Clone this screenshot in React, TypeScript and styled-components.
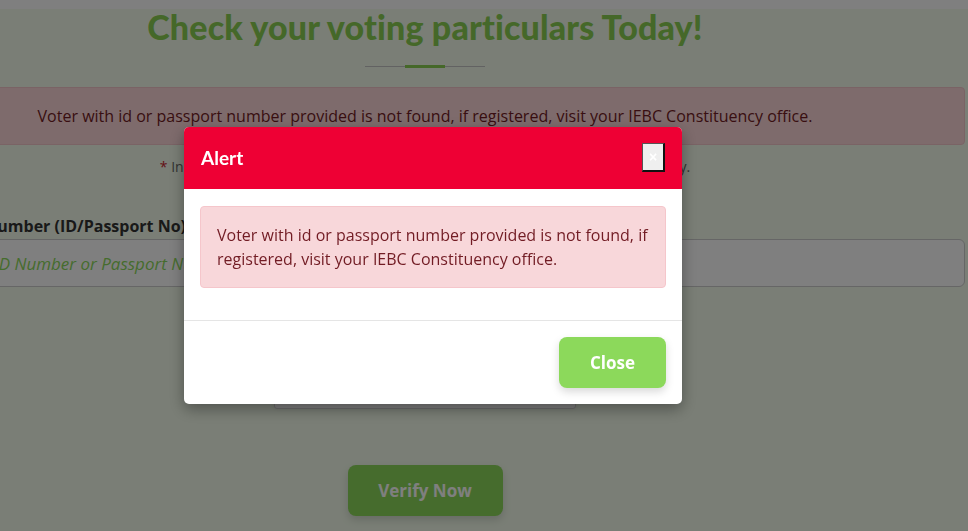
import React from "react";
import styled, { createGlobalStyle } from "styled-components";

const GlobalStyle = createGlobalStyle`
  html, body { margin: 0; padding: 0; }
  body {
    background: #f4fdec;
    font-family: "Open Sans", "Liberation Sans", sans-serif;
    overflow: hidden;
    width: 968px;
    height: 531px;
  }
  * { box-sizing: border-box; }
`;

const TopStrip = styled.div`
  height: 9px;
  background: #ffffff;
`;

const Page = styled.main`
  width: 1080px;
  margin-left: -115px;
  display: flex;
  flex-direction: column;
  align-items: center;
`;

const Title = styled.h1`
  margin: -2px 0 0;
  font-family: Lato, "Open Sans", sans-serif;
  font-weight: 900;
  font-size: 34px;
  line-height: 40px;
  letter-spacing: 0.15px;
  color: #8ad052;
`;

const Divider = styled.div`
  display: flex;
  align-items: center;
  margin-top: 18px;
  width: 120px;
`;

const DividerPart = styled.span<{ $thick?: boolean }>`
  flex: 1;
  height: ${(p) => (p.$thick ? "3px" : "1px")};
  background: ${(p) => (p.$thick ? "#8ad052" : "#c4c4c4")};
`;

const PageAlert = styled.div`
  align-self: stretch;
  margin-top: 19px;
  padding: 16px 20px;
  background: #fdd7d9;
  border: 1px solid #f5c6cb;
  border-radius: 4px;
  color: #721c24;
  font-size: 16px;
  line-height: 24px;
  text-align: center;
`;

const Note = styled.p`
  margin: 12px 0 0;
  font-size: 14px;
  line-height: 20px;
  color: #666;
`;

const Star = styled.span`
  color: #c8232c;
`;

const Field = styled.div`
  align-self: stretch;
  margin-top: 38px;
  display: flex;
  flex-direction: column;
`;

const Label = styled.label`
  padding-left: 12px;
  font-weight: 700;
  font-size: 16px;
  line-height: 22px;
  color: #333;
  margin-bottom: 2px;
`;

const Input = styled.input`
  height: 48px;
  border: 1px solid #ccc;
  border-radius: 6px;
  padding: 0 14px 0 26px;
  font-family: "Open Sans", sans-serif;
  font-size: 17px;
  background: #fff;
  &::placeholder {
    color: #8cd95b;
    font-style: italic;
  }
`;

const Captcha = styled.div`
  margin-top: 44px;
  width: 302px;
  height: 78px;
  background: #f9f9f9;
  border: 1px solid #d3d3d3;
  border-radius: 3px;
  box-shadow: 0 0 4px rgba(0, 0, 0, 0.08);
`;

const VerifyButton = styled.button`
  margin-top: 56px;
  width: 155px;
  height: 51px;
  border: none;
  border-radius: 8px;
  background: #8cd95b;
  color: #fff;
  font-family: "Open Sans", sans-serif;
  font-weight: 700;
  font-size: 17px;
  box-shadow: 0 4px 8px rgba(0, 0, 0, 0.15);
`;

const Overlay = styled.div`
  position: fixed;
  inset: 0;
  background: rgba(0, 0, 0, 0.5);
  padding: 127px 0 0 184px;
`;

const Dialog = styled.div`
  width: 498px;
  background: #fff;
  border-radius: 5px;
  overflow: hidden;
  box-shadow: 0 5px 15px rgba(0, 0, 0, 0.35);
`;

const Header = styled.div`
  height: 62px;
  background: #ee0034;
  display: flex;
  align-items: center;
  justify-content: space-between;
  padding: 0 17px 2px 17px;
`;

const HeaderTitle = styled.h4`
  margin: 0;
  font-family: Lato, "Open Sans", sans-serif;
  font-weight: 700;
  font-size: 19px;
  color: #fff;
`;

const XButton = styled.button`
  width: 23px;
  height: 29px;
  padding: 0;
  background: #efefef;
  border: 1px solid #555;
  border-right: 2px solid #111;
  border-bottom: 2px solid #111;
  color: #fff;
  font-size: 14px;
  font-weight: 700;
  line-height: 1;
  font-family: "Liberation Sans", sans-serif;
`;

const Body = styled.div`
  padding: 17px 16px 16px;
`;

const DialogAlert = styled.div`
  margin-bottom: 16px;
  padding: 16px 16px;
  background: #f8d7da;
  border: 1px solid #f5c6cb;
  border-radius: 4px;
  color: #721c24;
  font-size: 16px;
  line-height: 24px;
`;

const Footer = styled.div`
  border-top: 1px solid #e5e5e5;
  padding: 16px;
  display: flex;
  justify-content: flex-end;
`;

const CloseButton = styled.button`
  width: 107px;
  height: 51px;
  border: none;
  border-radius: 8px;
  background: #8cd95b;
  color: #fff;
  font-family: "Open Sans", sans-serif;
  font-weight: 700;
  font-size: 17px;
  box-shadow: 0 4px 8px rgba(0, 0, 0, 0.15);
`;

const message =
  "Voter with id or passport number provided is not found, if registered, visit your IEBC Constituency office.";

export default function App() {
  return (
    <>
      <GlobalStyle />
      <TopStrip />
      <Page>
        <Title>Check your voting particulars Today!</Title>
        <Divider>
          <DividerPart />
          <DividerPart $thick />
          <DividerPart />
        </Divider>
        <PageAlert>{message}</PageAlert>
        <Note>
          <Star>*</Star> Input your ID Number or Passport Number as used during registration to verify.
        </Note>
        <Field>
          <Label>Document Number (ID/Passport No)</Label>
          <Input placeholder="Enter your ID Number or Passport Number" />
        </Field>
        <Captcha />
        <VerifyButton>Verify Now</VerifyButton>
      </Page>
      <Overlay>
        <Dialog>
          <Header>
            <HeaderTitle>Alert</HeaderTitle>
            <XButton>×</XButton>
          </Header>
          <Body>
            <DialogAlert>{message}</DialogAlert>
          </Body>
          <Footer>
            <CloseButton>Close</CloseButton>
          </Footer>
        </Dialog>
      </Overlay>
    </>
  );
}
